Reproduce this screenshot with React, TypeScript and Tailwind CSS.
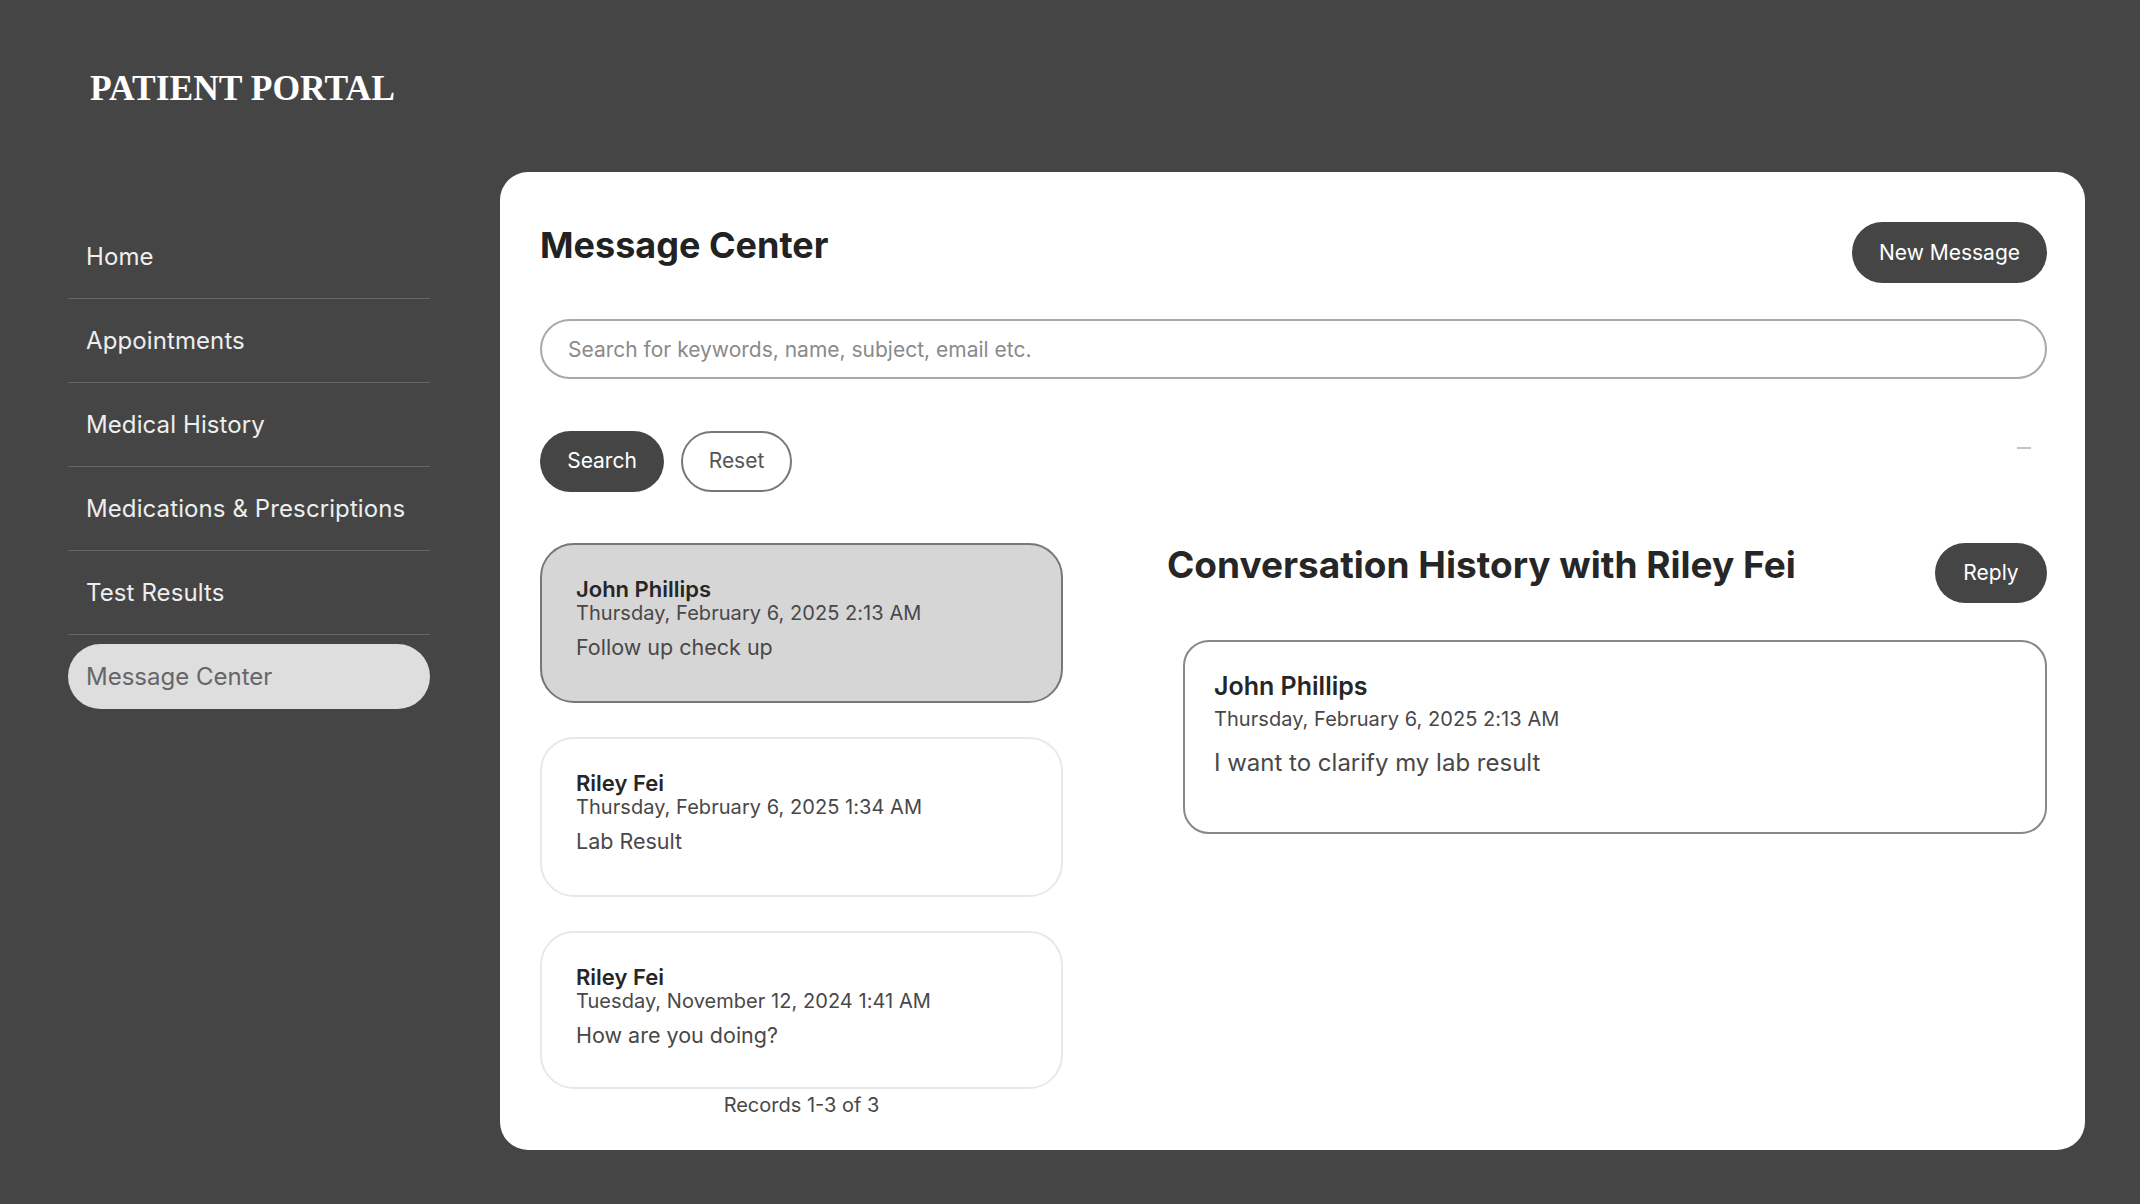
const font = "font-['Inter','Noto_Sans',sans-serif]";

const navItems = ['Home', 'Appointments', 'Medical History', 'Medications & Prescriptions', 'Test Results'];

const threads = [
  { name: 'John Phillips', date: 'Thursday, February 6, 2025 2:13 AM', subject: 'Follow up check up', active: true, height: 'h-[160px]' },
  { name: 'Riley Fei', date: 'Thursday, February 6, 2025 1:34 AM', subject: 'Lab Result', active: false, height: 'h-[160px]' },
  { name: 'Riley Fei', date: 'Tuesday, November 12, 2024 1:41 AM', subject: 'How are you doing?', active: false, height: 'h-[158px]' },
];

function Sidebar() {
  return (
    <aside className="w-[500px] shrink-0 pl-[68px] pr-[70px]">
      <div className="pt-[66px] pl-[22px] h-[215px]">
        <h1 className="font-['Liberation_Serif',serif] font-bold text-[35.5px] leading-[44px] text-white">PATIENT PORTAL</h1>
      </div>
      <nav>
        {navItems.map((item) => (
          <a key={item} className="flex h-[84px] items-center pl-[18px] border-b border-[#666666] text-[24px] tracking-[0.1px] text-[#eeeeee]">
            {item}
          </a>
        ))}
        <a className="mt-[9px] flex h-[65px] items-center pl-[18px] rounded-full bg-[#dedede] text-[24px] text-[#666666]">
          Message Center
        </a>
      </nav>
    </aside>
  );
}

function ThreadCard({ name, date, subject, active, height }: (typeof threads)[number]) {
  return (
    <div className={`${height} rounded-[34px] border-2 pl-[34px] pt-[32px] ${active ? 'bg-[#d6d6d6] border-[#777777]' : 'bg-white border-[#e8e8e8]'}`}>
      <div className="text-[22px] leading-[24px] font-semibold text-[#262626]">{name}</div>
      <div className="text-[20px] leading-[24px] tracking-[0.05px] text-[#484848]">{date}</div>
      <div className="mt-[10px] text-[21.5px] leading-[24px] text-[#484848]">{subject}</div>
    </div>
  );
}

export default function App() {
  return (
    <div className={`${font} flex min-h-screen bg-[#454545]`}>
      <Sidebar />
      <main className="flex-1 pt-[172px] pr-[55px]">
        <div className="h-[978px] rounded-[28px] bg-white pt-[50px] pl-[40px] pr-[38px]">
          <div className="flex items-start justify-between h-[61px]">
            <h2 className="text-[36px] leading-[46px] font-bold text-[#222222]">Message Center</h2>
            <button className="h-[61px] w-[195px] rounded-full bg-[#454545] text-[21px] text-white">New Message</button>
          </div>
          <input
            className="mt-[36px] block h-[60px] w-full rounded-full border-2 border-[#a9a9a9] pl-[26px] text-[21px] text-[#555555] placeholder:text-[#8a8a8a] outline-none"
            placeholder="Search for keywords, name, subject, email etc."
          />
          <div className="mt-[52px] flex h-[61px] gap-[17px]">
            <button className="w-[124px] rounded-full bg-[#454545] pb-[2px] text-[21px] text-white">Search</button>
            <button className="w-[111px] rounded-full border-2 border-[#777777] pb-[2px] text-[21px] text-[#555555]">Reset</button>
            <div className="ml-auto mt-[16px] mr-[16px] h-[2px] w-[14px] bg-[#c4c4c4]" />
          </div>
          <div className="mt-[51px] flex">
            <div className="w-[523px] shrink-0">
              <div className="flex flex-col gap-[34px]">
                {threads.map((t) => (
                  <ThreadCard key={t.date} {...t} />
                ))}
              </div>
              <div className="mt-[2px] text-center text-[20px] leading-[28px] text-[#484848]">Records 1-3 of 3</div>
            </div>
            <div className="ml-[104px] flex-1">
              <div className="flex items-start justify-between h-[60px]">
                <h3 className="text-[37px] leading-[44px] font-bold text-[#262626]">Conversation History with Riley Fei</h3>
                <button className="h-[60px] w-[112px] shrink-0 rounded-full bg-[#454545] text-[21px] text-white">Reply</button>
              </div>
              <div className="mt-[37px] ml-[16px] h-[194px] rounded-[26px] border-2 border-[#888888] pl-[29px] pt-[29px]">
                <div className="text-[25px] leading-[30px] font-semibold text-[#262626]">John Phillips</div>
                <div className="mt-[4px] text-[20px] leading-[28px] tracking-[0.05px] text-[#484848]">Thursday, February 6, 2025 2:13 AM</div>
                <div className="mt-[14px] text-[24px] leading-[32px] text-[#484848]">I want to clarify my lab result</div>
              </div>
            </div>
          </div>
        </div>
      </main>
    </div>
  );
}
